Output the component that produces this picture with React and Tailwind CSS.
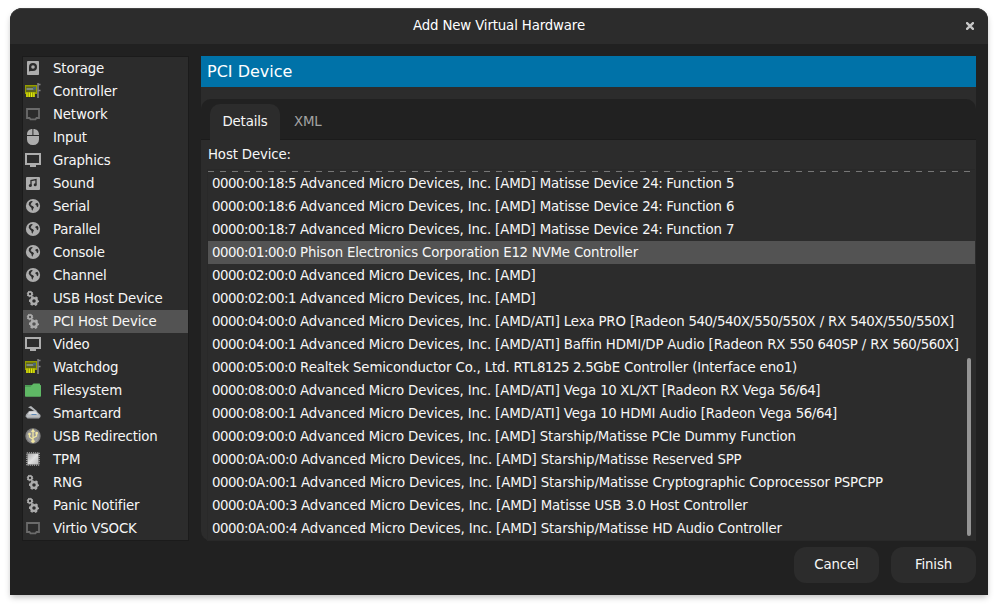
const GRAY = "#adadad";

function DiskIcon() {
  return (
    <svg width="16" height="16" viewBox="0 0 16 16">
      <rect x="2" y="1" width="12" height="14" rx="0.8" fill={GRAY} />
      <path d="M4 11.5V7a4 4 0 1 1 4 4H5.6z" fill="#2c2c2c" />
      <circle cx="8" cy="7" r="1.8" fill={GRAY} />
    </svg>
  );
}

function CardIcon() {
  return (
    <svg width="16" height="16" viewBox="0 0 16 16">
      <rect x="0" y="2" width="12" height="9" fill="#949d00" />
      <rect x="1" y="3.500" width="10" height="5.500" fill="#5c6320" />
      <rect x="1.500" y="5" width="7" height="2" fill="#7f8a80" />
      <rect x="8" y="4" width="3" height="2.500" fill="#47657c" />
      <rect x="1" y="10" width="9" height="4" fill="#8c9300" />
      <path d="M2 9.500v4.500M4.300 9.500v4.500M6.600 9.500v4.500M8.900 9.500v4.500" stroke="#e3eb12" strokeWidth="1.200" />
      <path d="M13 0v15M13 1.500h2.500M13 7.500h2.500" stroke="#858585" strokeWidth="1.500" fill="none" />
    </svg>
  );
}

function WiredIcon() {
  return (
    <svg width="16" height="16" viewBox="0 0 16 16">
      <path d="M2 3h12v9h-2.500l-1 1.300h-5l-1-1.300H2z" fill="none" stroke="#6b6b6b" strokeWidth="1.800" />
    </svg>
  );
}

function MouseIcon() {
  return (
    <svg width="16" height="16" viewBox="0 0 16 16">
      <path d="M7.4 0v6H2V5.4C2 2.2 4.2 0 7.4 0zM8.4 0C11.8 0 14 2.2 14 5.4V6H8.4zM2 7h12v3.5A5.5 5.5 0 0 1 8.5 16h-1A5.5 5.5 0 0 1 2 10.5z" fill={GRAY} />
    </svg>
  );
}

function DisplayIcon() {
  return (
    <svg width="16" height="16" viewBox="0 0 16 16">
      <path d="M1 2h14v10H1z" fill="none" stroke={GRAY} strokeWidth="2" />
      <path d="M6 12h4v1h1v2H5v-2h1z" fill={GRAY} />
    </svg>
  );
}

function SoundIcon() {
  return (
    <svg width="16" height="16" viewBox="0 0 16 16">
      <rect x="1" y="2" width="14" height="13" rx="1" fill={GRAY} />
      <path d="M6 10.500V5.500l5-1v5" fill="none" stroke="#2c2c2c" strokeWidth="1.300" />
      <circle cx="5.300" cy="10.500" r="1.500" fill="#2c2c2c" />
      <circle cx="10.200" cy="9.700" r="1.500" fill="#2c2c2c" />
    </svg>
  );
}

function GlobeIcon() {
  return (
    <svg width="16" height="16" viewBox="0 0 16 16">
      <circle cx="8" cy="8" r="7.100" fill={GRAY} />
      <path d="M4 4.500L6 3 7.800 3.300 7 4.500 6 5 6.300 6.300 5.300 6.800 6.500 7.500 8 8.300 9 9.500 8 11 7.500 12.800 6.700 11.800 6.500 10 5 8.500 3.700 6.800zM10.500 5.500l2-.8 1 2-.5 2.500-1.300-.6-.4-1.600-1-.3z" fill="#2c2c2c" />
    </svg>
  );
}

function GearsIcon() {
  return (
    <svg width="16" height="16" viewBox="0 0 16 16">
      <circle cx="5" cy="4" r="1.900" fill="none" stroke={GRAY} strokeWidth="1.500" />
      <circle cx="5" cy="4" r="2.700" fill="none" stroke={GRAY} strokeWidth="1.100" strokeDasharray="1.200 0.921" />
      <circle cx="9" cy="11" r="2.900" fill="none" stroke={GRAY} strokeWidth="2.300" />
      <circle cx="9" cy="11" r="4.300" fill="none" stroke={GRAY} strokeWidth="1.500" strokeDasharray="2.400 2.103" strokeDashoffset="1.200" />
    </svg>
  );
}

function FolderIcon() {
  return (
    <svg width="16" height="16" viewBox="0 0 16 16">
      <path d="M0 3.500Q0 3 .5 3H7l1.500-1.500h6Q15 1.500 15 2v1h.5q.5 0 .5.500V14q0 .8-.8.8H.8Q0 14.800 0 14z" fill="#5fb865" />
      <path d="M0 5V3.500L.5 3H7L5.500 5z" fill="#4d9c55" />
    </svg>
  );
}

function SmartcardIcon() {
  return (
    <svg width="16" height="16" viewBox="0 0 16 16">
      <path d="M3 2.200L6 1l6.500 5.500-2 .5L5.500 3.500z" fill="#b4b7ba" />
      <path d="M1 9.500L4 6l7-.3 4.500 4.300v2L14 13.500H2.500L.5 11.500z" fill="#a5a8ab" />
      <path d="M4.500 6.500l6-.2 3 3.200H2.800z" fill="#dcdddf" />
      <path d="M2 11h12.500" stroke="#cfd2d5" strokeWidth="1" />
      <path d="M6.500 9.500h5" stroke="#5c87b5" strokeWidth="1" />
    </svg>
  );
}

function UsbIcon() {
  return (
    <svg width="16" height="16" viewBox="0 0 16 16">
      <circle cx="8" cy="8" r="7.700" fill="#808080" />
      <circle cx="8" cy="8" r="6.300" fill="#999999" />
      <path d="M8 13V3M8 11.500L4.500 9V6M8 10l3.500-2V5" stroke="#f1e7a1" strokeWidth="1.300" fill="none" />
      <path d="M8 .5L10 4H6z" fill="#f1e7a1" />
      <circle cx="8" cy="13.300" r="1.700" fill="#f1e7a1" />
      <rect x="10.500" y="4" width="2.300" height="2.300" fill="#f1e7a1" />
      <circle cx="4.500" cy="6" r="1.300" fill="#f1e7a1" />
    </svg>
  );
}

function ChipIcon() {
  return (
    <svg width="16" height="16" viewBox="0 0 16 16">
      <defs>
        <linearGradient id="chip" x1="0" y1="0" x2="1" y2="1">
          <stop offset="0" stopColor="#a8a8a8" />
          <stop offset=".5" stopColor="#e0e0e0" />
          <stop offset="1" stopColor="#b8b8b8" />
        </linearGradient>
      </defs>
      <rect x="1.800" y="1.800" width="12.400" height="12.400" fill="none" stroke="#8e8e8e" strokeWidth="1.600" strokeDasharray="1.100 .97" />
      <rect x="2.500" y="2.500" width="11" height="11" fill="url(#chip)" />
    </svg>
  );
}

const hardware = [
  ["Storage", DiskIcon],
  ["Controller", CardIcon],
  ["Network", WiredIcon],
  ["Input", MouseIcon],
  ["Graphics", DisplayIcon],
  ["Sound", SoundIcon],
  ["Serial", GlobeIcon],
  ["Parallel", GlobeIcon],
  ["Console", GlobeIcon],
  ["Channel", GlobeIcon],
  ["USB Host Device", GearsIcon],
  ["PCI Host Device", GearsIcon],
  ["Video", DisplayIcon],
  ["Watchdog", CardIcon],
  ["Filesystem", FolderIcon],
  ["Smartcard", SmartcardIcon],
  ["USB Redirection", UsbIcon],
  ["TPM", ChipIcon],
  ["RNG", GearsIcon],
  ["Panic Notifier", GearsIcon],
  ["Virtio VSOCK", WiredIcon],
];

const devices = [
  "0000:00:18:5 Advanced Micro Devices, Inc. [AMD] Matisse Device 24: Function 5",
  "0000:00:18:6 Advanced Micro Devices, Inc. [AMD] Matisse Device 24: Function 6",
  "0000:00:18:7 Advanced Micro Devices, Inc. [AMD] Matisse Device 24: Function 7",
  "0000:01:00:0 Phison Electronics Corporation E12 NVMe Controller",
  "0000:02:00:0 Advanced Micro Devices, Inc. [AMD]",
  "0000:02:00:1 Advanced Micro Devices, Inc. [AMD]",
  "0000:04:00:0 Advanced Micro Devices, Inc. [AMD/ATI] Lexa PRO [Radeon 540/540X/550/550X / RX 540X/550/550X]",
  "0000:04:00:1 Advanced Micro Devices, Inc. [AMD/ATI] Baffin HDMI/DP Audio [Radeon RX 550 640SP / RX 560/560X]",
  "0000:05:00:0 Realtek Semiconductor Co., Ltd. RTL8125 2.5GbE Controller (Interface eno1)",
  "0000:08:00:0 Advanced Micro Devices, Inc. [AMD/ATI] Vega 10 XL/XT [Radeon RX Vega 56/64]",
  "0000:08:00:1 Advanced Micro Devices, Inc. [AMD/ATI] Vega 10 HDMI Audio [Radeon Vega 56/64]",
  "0000:09:00:0 Advanced Micro Devices, Inc. [AMD] Starship/Matisse PCIe Dummy Function",
  "0000:0A:00:0 Advanced Micro Devices, Inc. [AMD] Starship/Matisse Reserved SPP",
  "0000:0A:00:1 Advanced Micro Devices, Inc. [AMD] Starship/Matisse Cryptographic Coprocessor PSPCPP",
  "0000:0A:00:3 Advanced Micro Devices, Inc. [AMD] Matisse USB 3.0 Host Controller",
  "0000:0A:00:4 Advanced Micro Devices, Inc. [AMD] Starship/Matisse HD Audio Controller",
];

// Sets runs of digits tighter than the words around them.
function DeviceName({ text }) {
  return text.split(/([\d:]+)/).map((part, i) =>
    i % 2 ? (
      <span key={i} className="tracking-[-0.48px]">
        {part}
      </span>
    ) : (
      part
    ),
  );
}

export default function App() {
  return (
    <div className="h-[606px] w-[998px] overflow-hidden bg-white px-[10px] pt-2 font-['DejaVu_Sans',sans-serif] text-[13.333px] leading-[23px] tracking-[-0.15px] text-[#f7f7f7]">
      <div className="flex h-[587px] flex-col rounded-t-[12px] bg-[#212121] shadow-[0_3px_6px_-1px_rgba(0,0,0,0.28)]">
        <header className="relative flex h-9 shrink-0 items-center justify-center rounded-t-[12px] border-t border-[#434343] bg-[#2c2c2c] pb-[2px]">
          <h1 className="whitespace-nowrap text-white">Add New Virtual Hardware</h1>
          <button className="absolute top-[13px] right-[14px]" aria-label="Close">
            <svg width="8" height="8" viewBox="0 0 8 8">
              <path d="M.3.3l7.400 7.400M7.700.3L.3 7.700" stroke="#c8c8c8" strokeWidth="2.300" />
            </svg>
          </button>
        </header>

        <div className="flex gap-3 px-3 pt-3">
          <ul className="h-[485px] w-[167px] shrink-0 border border-[#1b1b1b] bg-[#2c2c2c]">
            {hardware.map(([name, Icon]) => (
              <li
                key={name}
                className={`flex h-[23px] items-start gap-3 pt-[3px] pl-[2px] whitespace-nowrap ${name === "PCI Host Device" ? "bg-[#535353]" : ""}`}
              >
                <Icon />
                <span className="-mt-[3px]">{name}</span>
              </li>
            ))}
          </ul>

          <main className="flex h-[485px] w-[775px] flex-col">
            <h2 className="flex h-[31px] items-center bg-[#0072a8] pl-[6px] text-[16px] tracking-normal text-white">PCI Device</h2>
            <div className="h-[53px] bg-[#2c2c2c] pt-3">
              <div className="flex h-[41px] items-end rounded-t-[10px] border-b border-[#1b1b1b] bg-[#212121] pl-[9px]">
                <div className="-mb-px flex h-9 w-[70px] items-center justify-center rounded-t-[10px] bg-[#2c2c2c] pb-[2px]">Details</div>
                <div className="flex h-9 items-center pl-[14px] text-[#a3a3a3]">XML</div>
              </div>
            </div>
            <section className="h-[401px] rounded-bl-[10px] bg-[#2c2c2c] pr-px pl-[6px]">
              <div className="h-[29px] pt-[3px] pl-px">Host Device:</div>
              <div className="relative h-[372px] border border-r-0 border-[#292929]">
                <svg className="block" width="763" height="2">
                  <path d="M0 1.500H763" stroke="#777" strokeDasharray="6 6" />
                </svg>
                <ul>
                  {devices.map((d, i) => (
                    <li key={d} className={`h-[23px] pl-1 whitespace-nowrap ${i === 3 ? "bg-[#535353]" : ""}`}>
                      <DeviceName text={d} />
                    </li>
                  ))}
                </ul>
                <div className="absolute top-[188px] right-[4px] h-[178px] w-1 rounded-full bg-[#959595]" />
              </div>
            </section>
          </main>
        </div>

        <footer className="flex justify-end gap-3 pt-[6px] pr-3">
          <button className="h-9 w-[85px] rounded-[12px] bg-[#2c2c2c] pb-[2px]">Cancel</button>
          <button className="h-9 w-[85px] rounded-[12px] bg-[#2c2c2c] pb-[2px]">Finish</button>
        </footer>
      </div>
    </div>
  );
}
